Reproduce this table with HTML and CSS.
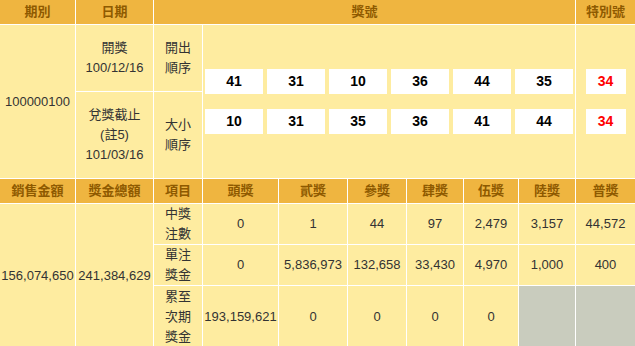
FILE: index.html
```html
<!DOCTYPE html>
<html lang="zh-Hant">
<head>
<meta charset="utf-8">
<title>開獎結果</title>
<link rel="stylesheet" href="styles.css">
</head>
<body>
<table class="lotto">
  <colgroup>
    <col class="c75"><col class="c77"><col class="c48"><col class="c75"><col class="c68">
    <col class="c58"><col class="c56"><col class="c54"><col class="c56"><col class="c59">
  </colgroup>
  <tr class="hrow">
    <th>期別</th>
    <th>日期</th>
    <th colspan="7">獎號</th>
    <th>特別號</th>
  </tr>
  <tr class="rowb">
    <td rowspan="2">100000100</td>
    <td>開獎<br>100/12/16</td>
    <td>開出<br>順序</td>
    <td colspan="6" rowspan="2" class="nums">
      <div class="numstack">
        <div class="numrow">
          <span class="ball">41</span><span class="ball">31</span><span class="ball">10</span><span class="ball">36</span><span class="ball">44</span><span class="ball">35</span>
        </div>
        <div class="numrow">
          <span class="ball">10</span><span class="ball">31</span><span class="ball">35</span><span class="ball">36</span><span class="ball">41</span><span class="ball">44</span>
        </div>
      </div>
    </td>
    <td rowspan="2" class="nums">
      <div class="numstack special">
        <span class="ball sp">34</span>
        <span class="ball sp">34</span>
      </div>
    </td>
  </tr>
  <tr class="rowc">
    <td>兌獎截止<br>(註5)<br>101/03/16</td>
    <td>大小<br>順序</td>
  </tr>
  <tr class="hrow">
    <th>銷售金額</th>
    <th>獎金總額</th>
    <th>項目</th>
    <th>頭獎</th>
    <th>貳獎</th>
    <th>參獎</th>
    <th>肆獎</th>
    <th>伍獎</th>
    <th>陸獎</th>
    <th>普獎</th>
  </tr>
  <tr class="rowe">
    <td rowspan="3">156,074,650</td>
    <td rowspan="3">241,384,629</td>
    <td>中獎<br>注數</td>
    <td>0</td>
    <td>1</td>
    <td>44</td>
    <td>97</td>
    <td>2,479</td>
    <td>3,157</td>
    <td>44,572</td>
  </tr>
  <tr class="rowe">
    <td>單注<br>獎金</td>
    <td>0</td>
    <td>5,836,973</td>
    <td>132,658</td>
    <td>33,430</td>
    <td>4,970</td>
    <td>1,000</td>
    <td>400</td>
  </tr>
  <tr class="rowg">
    <td>累至<br>次期<br>獎金</td>
    <td>193,159,621</td>
    <td>0</td>
    <td>0</td>
    <td>0</td>
    <td>0</td>
    <td class="empty"></td>
    <td class="empty"></td>
  </tr>
</table>
</body>
</html>
```

FILE: styles.css
```css
html, body {
  margin: 0;
  padding: 0;
  background: #ffffff;
  overflow: hidden;
}

.lotto {
  table-layout: fixed;
  width: 637px;
  margin: -1px 0 0 -1px;
  border-collapse: separate;
  border-spacing: 1px;
  background: #ffffff;
  font-family: "Liberation Sans", "Noto Sans CJK TC", Arial, sans-serif;
  font-size: 13px;
  line-height: 20px;
  color: #333333;
}

.c75 { width: 75px; }
.c77 { width: 77px; }
.c48 { width: 48px; }
.c68 { width: 68px; }
.c58 { width: 58px; }
.c56 { width: 56px; }
.c54 { width: 54px; }
.c59 { width: 59px; }

.lotto th,
.lotto td {
  padding: 0;
  text-align: center;
  vertical-align: middle;
  white-space: nowrap;
}

.lotto th {
  background: #efb540;
  color: #8e5a00;
  font-weight: bold;
  height: 24px;
  line-height: 24px;
}

.lotto td {
  background: #feeca0;
}

.rowb { height: 66px; }
.rowc { height: 86px; }
.rowe { height: 40px; }
.rowg { height: 62px; }

.lotto td.empty {
  background: #c9ccbe;
}

.numstack {
  display: flex;
  flex-direction: column;
  align-items: center;
  gap: 15px;
}

.numrow {
  display: flex;
  gap: 4px;
}

.ball {
  display: block;
  width: 58px;
  height: 25px;
  line-height: 25px;
  background: #ffffff;
  color: #000000;
  font-weight: bold;
  font-size: 14px;
  text-align: center;
}

.ball.sp {
  width: 40px;
  color: #ff0000;
}
```
